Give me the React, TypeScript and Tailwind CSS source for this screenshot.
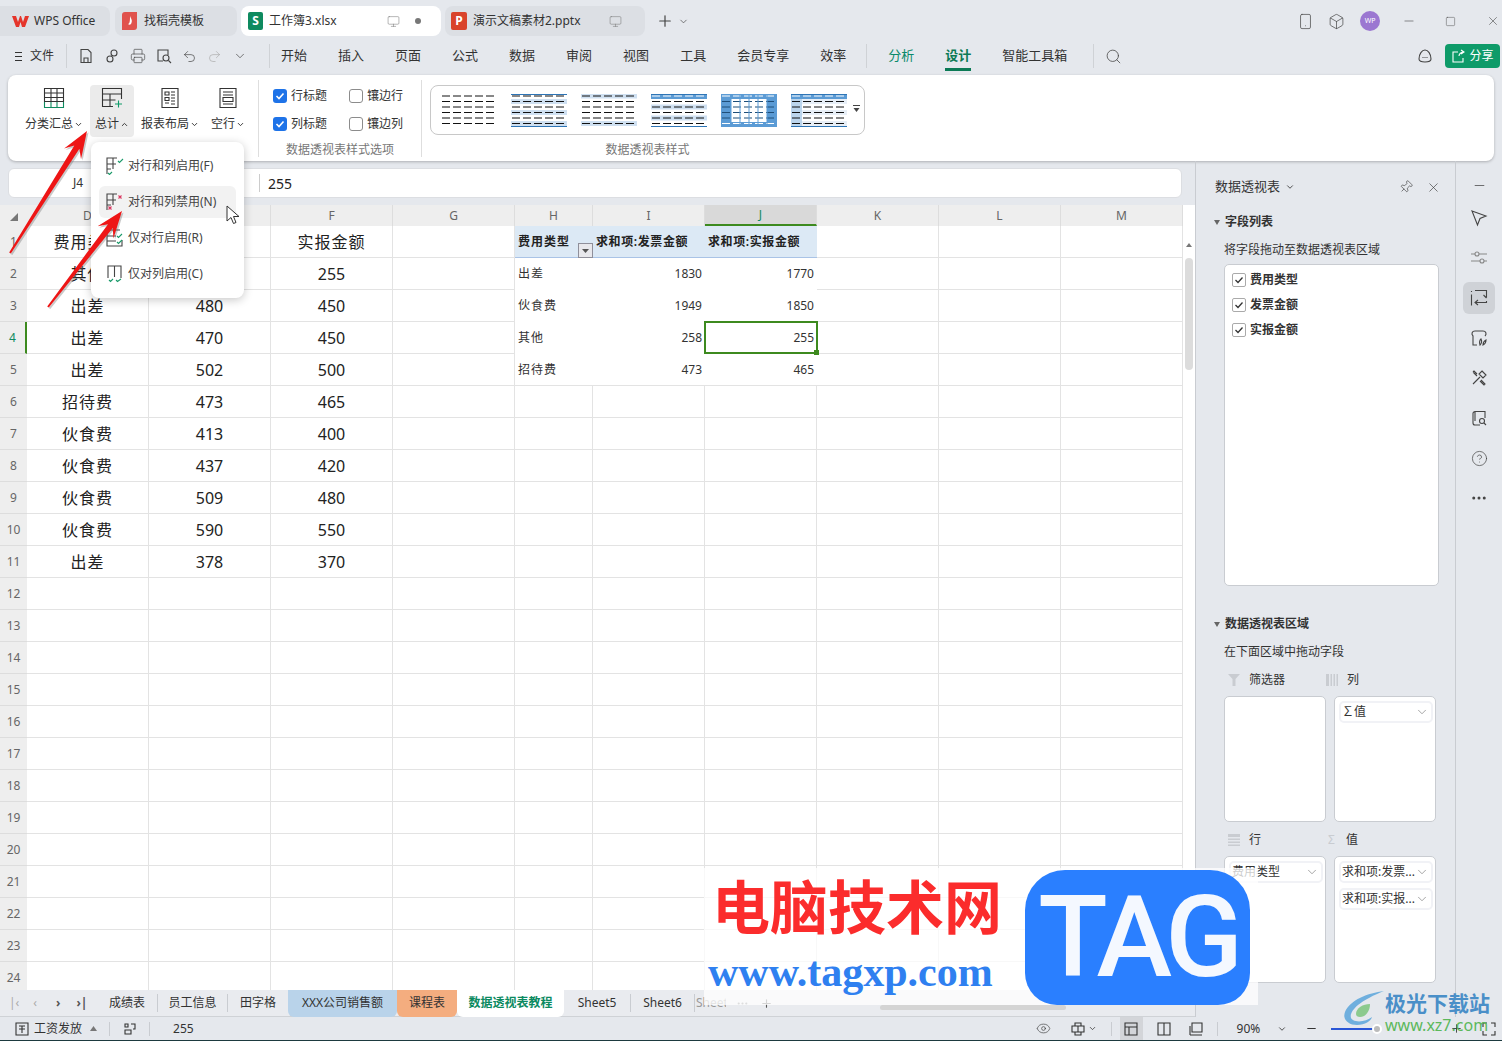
import { ReactNode } from "react";
import {
  Box, ChevronDown, ChevronUp, CircleHelp, Ellipsis, Eye, Minus, Monitor, Pin, Plus, Printer,
  Redo2, Search, Smartphone, Square, Undo2, X,
} from "lucide-react";

const columns = [
  { name: "D", w: "w-[122px]" },
  { name: "E", w: "w-[122px]" },
  { name: "F", w: "w-[122px]" },
  { name: "G", w: "w-[122px]" },
  { name: "H", w: "w-[78px]" },
  { name: "I", w: "w-[112px]" },
  { name: "J", w: "w-[112px]" },
  { name: "K", w: "w-[122px]" },
  { name: "L", w: "w-[122px]" },
  { name: "M", w: "w-[122px]" },
];

const source = [
  ["费用类型", "发票金额", "实报金额"],
  ["其他", "258", "255"],
  ["出差", "480", "450"],
  ["出差", "470", "450"],
  ["出差", "502", "500"],
  ["招待费", "473", "465"],
  ["伙食费", "413", "400"],
  ["伙食费", "437", "420"],
  ["伙食费", "509", "480"],
  ["伙食费", "590", "550"],
  ["出差", "378", "370"],
];

const pivot = [
  ["出差", "1830", "1770"],
  ["伙食费", "1949", "1850"],
  ["其他", "258", "255"],
  ["招待费", "473", "465"],
];

function Ico({ w = 20, h = 20, vb = "0 0 20 20", className = "", children }: { w?: number; h?: number; vb?: string; className?: string; children: ReactNode }) {
  return (
    <svg width={w} height={h} viewBox={vb} fill="none" stroke="currentColor" strokeWidth="1.1" className={className}>
      {children}
    </svg>
  );
}

function RibbonButton({ label, icon, active, up }: { label: string; icon: ReactNode; active?: boolean; up?: boolean }) {
  return (
    <div className={`flex h-[52px] flex-col items-center rounded pt-[2px] ${active ? "w-[44px] bg-[#ebebeb]" : label.length > 2 ? "w-[72px]" : "w-[44px]"}`}>
      <div className="h-[22px] text-[#333]">{icon}</div>
      <div className="mt-[6px] flex h-[18px] items-center text-[12px] whitespace-nowrap text-[#333]">
        {label}
        {up ? <ChevronUp size={9} strokeWidth={2.5} className="ml-px" /> : <ChevronDown size={9} strokeWidth={2.5} className="ml-px" />}
      </div>
    </div>
  );
}

function Check({ label, on }: { label: string; on?: boolean }) {
  return (
    <div className="flex h-[28px] items-center gap-1 text-[12px] text-[#333]">
      {on ? (
        <div className="flex h-[14px] w-[14px] items-center justify-center rounded-[3px] bg-[#1e73e8]">
          <svg width="10" height="10" viewBox="0 0 10 10" fill="none" stroke="#fff" strokeWidth="1.6"><path d="M1.5 5l2.5 2.5 4.5-5" /></svg>
        </div>
      ) : (
        <div className="h-[14px] w-[14px] rounded-[3px] border border-[#8c8c8c] bg-white" />
      )}
      {label}
    </div>
  );
}

function Thumb({ head, foot, band, bandColor, side, sideFill, grid, lines }: { head?: boolean; foot?: boolean; band?: number[]; bandColor?: string; side?: boolean; sideFill?: string; grid?: boolean; lines?: boolean }) {
  const ys = [2, 7.5, 13, 18.5, 24, 29.5];
  return (
    <svg width="56" height="33" viewBox="0 0 56 33" className="shrink-0">
      {(band ?? []).map((i) => (
        <rect key={i} x="0" y={ys[i] - 2.5} width="56" height="5" fill={bandColor ?? "#cfe0f1"} />
      ))}
      {sideFill && <rect x="0" y="0" width="11" height="33" fill={sideFill} />}
      {side && <rect x="0" y="0" width="10" height="33" fill="#5b9bd5" />}
      {side && <rect x="46" y="0" width="10" height="33" fill="#5b9bd5" />}
      {head && <rect x="0" y="0" width="56" height="5" fill="#5b9bd5" />}
      {foot && <rect x="0" y="28" width="56" height="5" fill="#5b9bd5" />}
      {ys.map((y, i) => (
        <line key={y} x1="1" x2="55" y1={y} y2={y} stroke={(head && i === 0) || (foot && i === 5) ? "#fff" : grid ? "#1f4e79" : "#111"} strokeWidth="1" strokeDasharray="8 3" />
      ))}
      {lines && <line x1="0" x2="56" y1="0.5" y2="0.5" stroke="#2e75b6" />}
      {lines && <line x1="0" x2="56" y1="32.5" y2="32.5" stroke="#2e75b6" />}
      {grid && [10, 19, 28, 37, 46].map((x) => <line key={x} x1={x} x2={x} y1="0" y2="33" stroke="#5b9bd5" />)}
    </svg>
  );
}

function Chip({ label, wide }: { label: string; wide?: boolean }) {
  return (
    <div className={`flex h-[22px] items-center justify-between rounded-[5px] border-2 border-[#f1f2f6] bg-white pr-[2px] pl-[1px] text-[12px] whitespace-nowrap text-[#333] ${wide ? "w-[94px]" : "w-[94px]"}`}>
      <span>{label}</span>
      <ChevronDown size={14} strokeWidth={1} className="shrink-0 text-[#666]" />
    </div>
  );
}

function AreaBox({ h, children }: { h: string; children?: ReactNode }) {
  return <div className={`flex w-[102px] flex-col gap-[5px] rounded-[5px] border border-[#c9ccd1] bg-white p-1 ${h}`}>{children}</div>;
}

function arrowPoints(x1: number, y1: number, x2: number, y2: number) {
  const len = Math.hypot(x2 - x1, y2 - y1);
  const dx = (x2 - x1) / len;
  const dy = (y2 - y1) / len;
  const nx = -dy;
  const ny = dx;
  const p = (back: number, off: number) => `${x2 - dx * back + nx * off},${y2 - dy * back + ny * off}`;
  return [`${x1 + nx * 1},${y1 + ny * 1}`, p(19, 3), p(27, 10), `${x2},${y2}`, p(27, -10), p(19, -3), `${x1 - nx * 1},${y1 - ny * 1}`].join(" ");
}

function MenuRow({ label, active, icon }: { label: string; active?: boolean; icon: ReactNode }) {
  return (
    <div className={`flex h-8 items-center gap-[4px] rounded-md pl-[7px] text-[12px] whitespace-nowrap text-[#444] ${active ? "bg-[#f2f2f2]" : ""}`}>
      {icon}
      {label}
    </div>
  );
}

const tick = "#1a9a6a";
const cross = "#d9365f";

export default function App() {
  return (
    <div className="relative flex h-[1041px] w-[1502px] flex-col overflow-hidden bg-[#e5e8ed] [font-family:'Noto_Sans','Noto_Sans_CJK_SC',sans-serif] text-[#333]">
      {/* title bar */}
      <div className="flex h-[40px] items-start pt-[6px] text-[12px]">
        <div className="flex h-[30px] w-[110px] items-center gap-[5px] rounded-r-lg bg-[#dcdfe4] pl-[12px]">
          <svg width="17" height="13" viewBox="0 0 17 13"><path d="M0 1h4l2 6 2-6h1l2 6 2-6h4l-4 11h-3L8.500 7 7 12H4z" fill="#e5352b" /></svg>
          WPS Office
        </div>
        <div className="ml-[5px] flex h-[30px] w-[122px] items-center gap-[7px] rounded-lg bg-[#dcdfe4] pl-[7px]">
          <svg width="15" height="18" viewBox="0 0 15 18"><path d="M3 0h12v15a3 3 0 0 1-3 3H0V3a3 3 0 0 1 3-3z" fill="#e0524d" /><path d="M8 4c1 3 3 4 1 8-1 1-2 1-3 0 2 0 2-4 2-8z" fill="#fff" /></svg>
          找稻壳模板
        </div>
        <div className="ml-[4px] flex h-[30px] w-[200px] items-center rounded-lg bg-white pl-[7px]">
          <div className="flex h-[18px] w-[15px] items-center justify-center rounded-[2px] bg-[#0e8a5f] text-[12px] font-bold text-white">S</div>
          <span className="ml-[6px] w-[118px]">工作簿3.xlsx</span>
          <Monitor size={13} strokeWidth={1} className="text-[#777]" />
          <div className="ml-[15px] h-[6px] w-[6px] rounded-full bg-[#777]" />
        </div>
        <div className="ml-[4px] flex h-[30px] w-[200px] items-center rounded-lg bg-[#dcdfe4] pl-[6px]">
          <div className="flex h-[18px] w-[16px] items-center justify-center rounded-[2px] bg-[#d9432b] text-[12px] font-bold text-white">P</div>
          <span className="ml-[6px] w-[136px] whitespace-nowrap">演示文稿素材2.pptx</span>
          <Monitor size={13} strokeWidth={1} className="text-[#777]" />
        </div>
        <div className="ml-[11px] flex h-[30px] items-center text-[#444]">
          <Plus size={18} strokeWidth={1.6} />
          <ChevronDown size={11} strokeWidth={1.5} className="ml-[4px]" />
        </div>
        <div className="ml-auto flex h-[30px] items-center text-[#444]">
          <Smartphone size={17} strokeWidth={1} />
          <Box size={17} strokeWidth={1} className="ml-[14px]" />
          <div className="ml-[15px] flex h-[20px] w-[20px] items-center justify-center rounded-full bg-[#9b77d1] text-[7px] text-white">WP</div>
          <Minus size={14} strokeWidth={1} className="ml-[22px]" />
          <Square size={11} strokeWidth={1} className="ml-[29px]" />
          <X size={14} strokeWidth={1} className="mr-[2px] ml-[30px]" />
        </div>
      </div>

      {/* menu bar */}
      <div className="flex h-[32px] items-center text-[13px] text-[#333]">
        <div className="ml-[15px] flex w-[7px] flex-col gap-[3px]">
          <div className="h-px bg-[#333]" /><div className="h-px bg-[#333]" /><div className="h-px bg-[#333]" />
        </div>
        <span className="ml-[8px] text-[12px]">文件</span>
        <div className="ml-[12px] h-[24px] w-px bg-[#cfd2d6]" />
        <div className="ml-[11px] flex items-center gap-[10px] text-[#444]">
          <Ico w={16} h={16} vb="0 0 16 16"><path d="M3 1.500h7l3 3V14.500H3zM6 14.500V10h4v4.500" /></Ico>
          <Ico w={16} h={16} vb="0 0 16 16"><circle cx="10" cy="5" r="3" /><circle cx="6" cy="11" r="3" /></Ico>
          <Printer size={16} strokeWidth={1} />
          <Ico w={16} h={16} vb="0 0 16 16"><path d="M7 13H2V2h10v5" /><circle cx="10" cy="10" r="3" /><path d="M12.500 12.500L15 15" /></Ico>
          <Undo2 size={15} strokeWidth={1.1} />
          <Redo2 size={15} strokeWidth={1.1} className="text-[#aaa]" />
          <ChevronDown size={14} strokeWidth={1.2} className="ml-[1px]" />
        </div>
        <div className="ml-[22px] h-[24px] w-px bg-[#cfd2d6]" />
        <div className="ml-[11px] flex items-center gap-[31px]">
          {["开始", "插入", "页面", "公式", "数据", "审阅", "视图", "工具", "会员专享", "效率"].map((m) => <span key={m}>{m}</span>)}
        </div>
        <div className="ml-[20px] h-[24px] w-px bg-[#cfd2d6]" />
        <span className="ml-[21px] text-[#0b8a6a]">分析</span>
        <div className="relative ml-[31px] font-semibold text-[#0b7a55]">
          设计
          <div className="absolute top-[22px] left-0 h-[3px] w-full bg-[#0b7a55]" />
        </div>
        <span className="ml-[31px]">智能工具箱</span>
        <div className="ml-[26px] h-[24px] w-px bg-[#cfd2d6]" />
        <Search size={17} strokeWidth={1.1} className="ml-[11px] text-[#444]" />
        <Ico w={18} h={18} vb="0 0 18 18" className="ml-auto text-[#444]"><path d="M3 12c0-5 3-9 6-9s6 4 6 9c0 2-2 3-6 3s-6-1-6-3z" /><path d="M6.500 10.500h1M8.500 10.500h1M10.500 10.500h1" /></Ico>
        <div className="mr-[2px] ml-[11px] flex h-[24px] w-[55px] items-center justify-center gap-[3px] rounded bg-[#0e9b69] text-[12px] text-white">
          <Ico w={15} h={15} vb="0 0 15 15"><path d="M7 3H2v10h10V9M8 7c0-2 2-4 5-4M10 1l3 2-3 2" /></Ico>
          分享
        </div>
      </div>

      {/* ribbon */}
      <div className="mx-2 mt-[3px] flex h-[86px] rounded-lg bg-white shadow-[0_1px_3px_rgba(0,0,0,0.25)]">
        <div className="mt-[10px] ml-[10px] flex w-[232px] items-start">
          <RibbonButton
            label="分类汇总"
            icon={
              <Ico w={22} h={22} vb="0 0 22 22">
                <path d="M1.500 1.500h19v13h-19zM1.500 6h19M1.500 10.500h19M8 1.500v13M14 1.500v13" />
                <path d="M1.500 15v5.500h19V15M8 15v5.500M14 15v5.500" stroke="#0e8a5f" />
              </Ico>
            }
          />
          <RibbonButton
            label="总计"
            active
            up
            icon={
              <Ico w={22} h={22} vb="0 0 22 22">
                <path d="M12 19.500H1.500v-18h19V12M1.500 7h19M1.500 13h13M9 7v12.500" />
                <path d="M14 17h7M17.500 13.500v7" stroke="#0e9b69" />
              </Ico>
            }
          />
          <RibbonButton
            label="报表布局"
            icon={
              <Ico w={22} h={22} vb="0 0 22 22">
                <path d="M3 1.500h16v19H3zM6 5h4v3H6zM6 10.500h4v3H6zM6 16h4M12 5h4M12 8h4M12 11h4M12 14h4M12 17h4" />
              </Ico>
            }
          />
          <RibbonButton
            label="空行"
            icon={
              <Ico w={22} h={22} vb="0 0 22 22">
                <path d="M3 1.500h16v19H3zM6 5h10M6 8h10M6 10.500h10v4H6zM6 17h10" />
              </Ico>
            }
          />
        </div>
        <div className="mt-[5px] ml-[8px] h-[77px] w-px bg-[#dedede]" />
        <div className="flex w-[162px] flex-col pt-[7px]">
          <div className="ml-[14px] grid h-[56px] grid-cols-[76px_60px]">
            <Check label="行标题" on />
            <Check label="镶边行" />
            <Check label="列标题" on />
            <Check label="镶边列" />
          </div>
          <div className="mt-[3px] h-[18px] text-center text-[12px] leading-[18px] whitespace-nowrap text-[#777]">数据透视表样式选项</div>
        </div>
        <div className="mt-[5px] h-[77px] w-px bg-[#dedede]" />
        <div className="ml-[8px] flex flex-col pt-[10px]">
          <div className="flex h-[50px] w-[435px] items-center gap-[14px] rounded-lg border border-[#c8c8c8] pl-[10px]">
            <Thumb />
            <Thumb lines band={[1, 3, 5]} />
            <Thumb band={[0, 5]} lines={false} />
            <Thumb head band={[2, 4]} lines />
            <Thumb side head foot grid />
            <Thumb head sideFill="#bcd5ec" lines band={[1, 3, 5]} bandColor="#e8eff7" />
            <svg width="8" height="10" viewBox="0 0 8 10" className="-ml-[8px]" fill="#444"><rect x="0" y="0" width="7" height="1" /><path d="M0.500 3h6l-3 4z" /></svg>
          </div>
          <div className="mt-[6px] h-[18px] text-center text-[12px] leading-[18px] text-[#777]">数据透视表样式</div>
        </div>
      </div>

      {/* workspace */}
      <div className="flex h-[856px]">
        <div className="flex w-[1195px] flex-col">
          <div className="mt-[7px] ml-[8px] flex h-[30px] w-[1174px] items-center rounded-md border border-[#dcdee2] bg-white">
            <span className="ml-[64px] w-[186px] text-[12px]">J4</span>
            <div className="h-[18px] w-px bg-[#ccc]" />
            <span className="ml-[8px] text-[14px] text-[#222]">255</span>
          </div>

          <div className="mt-[7px] flex h-[21px] bg-[#eeeeee] text-[12px] text-[#666]">
            <div className="flex w-[27px] items-end justify-center pb-[5px]">
              <svg width="8" height="8" viewBox="0 0 8 8"><path d="M8 0v8H0z" fill="#777" /></svg>
            </div>
            {columns.map((c) => (
              <div key={c.name} className={`flex items-center justify-center border-r border-[#dddddd] ${c.w} ${c.name === "J" ? "border-b-2 border-b-[#3d8a1f] bg-[#d9d9d9] text-[#0e8a5f]" : ""}`}>
                {c.name}
              </div>
            ))}
            <div className="flex-1 bg-white" />
          </div>

          <div className="flex h-[764px] overflow-hidden bg-white">
            <div className="w-[1183px] shrink-0">
              {Array.from({ length: 24 }, (_, r) => {
                const src = source[r];
                const pv = r >= 1 && r <= 4 ? pivot[r - 1] : null;
                return (
                  <div key={r} className="flex h-8">
                    <div className={`flex w-[27px] items-center justify-center border-b border-[#dddddd] bg-[#eeeeee] text-[12px] ${r === 3 ? "border-r-2 border-r-[#3d8a1f] bg-[#d9d9d9] text-[#0e8a5f]" : "text-[#666]"}`}>
                      {r + 1}
                    </div>
                    {[0, 1, 2].map((c) => (
                      <div key={c} className={`flex w-[122px] items-center justify-center border-r border-b border-[#e3e3e3] text-[#222] ${c === 0 ? "" : ""} text-[16px] ${r === 0 || c === 0 ? "tracking-[1px]" : ""}`}>
                        {src?.[c]}
                      </div>
                    ))}
                    <div className="w-[122px] border-r border-b border-[#e3e3e3]" />
                    {r === 0 ? (
                      <>
                        <div className="relative flex w-[78px] items-center border-b border-[#a9c3e6] bg-[#dce9f5] pl-[3px] text-[12px] font-semibold tracking-[1px] whitespace-nowrap text-[#222]">
                          费用类型
                          <div className="absolute top-[17px] right-0 flex h-[15px] w-[15px] items-center justify-center border border-[#8f8f9a] bg-[#e8e8ec]">
                            <svg width="7" height="4" viewBox="0 0 7 4"><path d="M0 0h7L3.500 4z" fill="#555" /></svg>
                          </div>
                        </div>
                        <div className="flex w-[112px] items-center border-b border-[#a9c3e6] bg-[#dce9f5] pl-[3px] text-[12px] font-semibold tracking-[0.6px] whitespace-nowrap text-[#222]">求和项:发票金额</div>
                        <div className="flex w-[112px] items-center border-b border-[#a9c3e6] bg-[#dce9f5] pl-[3px] text-[12px] font-semibold tracking-[0.6px] whitespace-nowrap text-[#222]">求和项:实报金额</div>
                      </>
                    ) : pv ? (
                      <>
                        <div className={`flex w-[78px] items-center pl-[3px] text-[12px] tracking-[1px] text-[#333] ${r === 4 ? "border-b border-[#e3e3e3]" : ""}`}>{pv[0]}</div>
                        <div className={`flex w-[112px] items-center justify-end pr-[3px] text-[12px] text-[#333] ${r === 4 ? "border-b border-[#e3e3e3]" : ""}`}>{pv[1]}</div>
                        {r === 3 ? (
                          <div className="relative z-10 -mt-px flex h-[33px] w-[114px] -ml-px -mr-px items-center justify-end border-2 border-[#3d8a1f] pr-[2px] text-[12px] text-[#333]">
                            {pv[2]}
                            <div className="absolute -right-[3px] -bottom-[3px] h-[5px] w-[5px] bg-[#3d8a1f]" />
                          </div>
                        ) : (
                          <div className={`flex w-[112px] items-center justify-end pr-[3px] text-[12px] text-[#333] ${r === 4 ? "border-b border-[#e3e3e3]" : ""}`}>{pv[2]}</div>
                        )}
                      </>
                    ) : (
                      <>
                        <div className="w-[78px] border-r border-b border-[#e3e3e3]" />
                        <div className="w-[112px] border-r border-b border-[#e3e3e3]" />
                        <div className="w-[112px] border-r border-b border-[#e3e3e3]" />
                      </>
                    )}
                    <div className="w-[122px] border-r border-b border-[#e3e3e3]" />
                    <div className="w-[122px] border-r border-b border-[#e3e3e3]" />
                    <div className="w-[122px] border-r border-b border-[#e3e3e3]" />
                  </div>
                );
              })}
            </div>
            <div className="flex w-[12px] flex-col items-center pt-[17px]">
              <svg width="6" height="4" viewBox="0 0 6 4"><path d="M3 0l3 4H0z" fill="#777" /></svg>
              <div className="mt-[11px] h-[112px] w-[8px] rounded bg-[#dcdcdc]" />
            </div>
          </div>

          {/* sheet tabs */}
          <div className="flex h-[27px] items-center border-b border-[#cfd2d6] bg-[#e9ebef] text-[12px] whitespace-nowrap text-[#333]">
            <div className="flex w-[97px] items-center gap-[7px] pl-[9px] text-[#555]">
              <span className="text-[#aaa]">|‹</span>
              <span className="ml-[7px] text-[#aaa]">‹</span>
              <span className="ml-[12px] font-bold">›</span>
              <span className="ml-[9px] font-bold">›|</span>
            </div>
            <div className="flex h-[27px] w-[60px] items-center justify-center">成绩表</div>
            <div className="h-[18px] w-px bg-[#c9ccd1]" />
            <div className="flex h-[27px] w-[69px] items-center justify-center">员工信息</div>
            <div className="h-[18px] w-px bg-[#c9ccd1]" />
            <div className="flex h-[27px] w-[60px] items-center justify-center">田字格</div>
            <div className="flex h-[27px] w-[109px] items-center justify-center rounded-b-md bg-[#b9d3ea]">XXX公司销售额</div>
            <div className="flex h-[27px] w-[60px] items-center justify-center rounded-b-md bg-[#f4ad7f]">课程表</div>
            <div className="flex h-[27px] w-[107px] items-center justify-center rounded-b-md bg-white font-semibold text-[#0b8a5f]">数据透视表教程</div>
            <div className="flex h-[27px] w-[66px] items-center justify-center">Sheet5</div>
            <div className="h-[18px] w-px bg-[#c9ccd1]" />
            <div className="flex h-[27px] w-[63px] items-center justify-center">Sheet6</div>
            <div className="h-[18px] w-px bg-[#c9ccd1]" />
            <div className="w-[31px] overflow-hidden pl-[1px] text-[#999]">Sheet7</div>
            <Ellipsis size={13} className="ml-[10px] text-[#777]" />
            <Plus size={13} strokeWidth={2} className="ml-[11px] text-[#555]" />
            <div className="mt-[8px] ml-[107px] h-[5px] w-[186px] rounded bg-[#d4d4d4]" />
          </div>
        </div>

        {/* pivot panel */}
        <div className="w-[261px] border-x border-[#c9ccd1] pl-[28px]">
          <div className="mt-[8px] -ml-[9px] flex h-[36px] w-[226px] items-center text-[13px]">
            数据透视表
            <ChevronDown size={10} strokeWidth={2} className="ml-[5px]" />
            <Pin size={14} strokeWidth={1} className="ml-auto rotate-45" />
            <X size={15} strokeWidth={1} className="ml-[13px]" />
          </div>
          <div className="mt-[7px] flex h-[20px] items-center text-[12px] font-semibold">
            <svg width="6" height="5" viewBox="0 0 6 5" className="-ml-[10px] mr-[5px]"><path d="M0 0h6L3 5z" fill="#666" /></svg>
            字段列表
          </div>
          <div className="mt-[8px] h-[20px] text-[12px] leading-[20px]">将字段拖动至数据透视表区域</div>
          <div className="mt-[4px] h-[322px] w-[215px] rounded-[5px] border border-[#c9ccd1] bg-white pt-[2px] pl-[7px]">
            {["费用类型", "发票金额", "实报金额"].map((f) => (
              <div key={f} className="flex h-[25px] items-center gap-[4px] text-[12px] font-semibold">
                <div className="flex h-[14px] w-[14px] items-center justify-center rounded-[2px] border border-[#aaa] bg-white">
                  <svg width="10" height="10" viewBox="0 0 10 10" fill="none" stroke="#333" strokeWidth="1.3"><path d="M1.500 5l2.500 2.500 4.500-5" /></svg>
                </div>
                {f}
              </div>
            ))}
          </div>
          <div className="mt-[28px] flex h-[20px] items-center text-[12px] font-semibold">
            <svg width="6" height="5" viewBox="0 0 6 5" className="-ml-[10px] mr-[5px]"><path d="M0 0h6L3 5z" fill="#666" /></svg>
            数据透视表区域
          </div>
          <div className="mt-[8px] h-[20px] text-[12px] leading-[20px]">在下面区域中拖动字段</div>
          <div className="mt-[8px] flex h-[20px] items-center text-[12px]">
            <svg width="14" height="14" viewBox="0 0 14 14" className="ml-[3px]"><path d="M1 1h12L8.500 6v7h-3V6z" fill="#c9ccd1" /></svg>
            <span className="ml-[8px] w-[77px]">筛选器</span>
            <svg width="12" height="12" viewBox="0 0 12 12" className="mr-[9px]" fill="#c9ccd1"><rect width="3" height="12" /><rect x="4.500" width="1.500" height="12" /><rect x="7.500" width="1.500" height="12" /><rect x="10.500" width="1.500" height="12" /></svg>
            列
          </div>
          <div className="mt-[6px] flex gap-[8px]">
            <AreaBox h="h-[126px]" />
            <AreaBox h="h-[126px]"><Chip label="∑值" /></AreaBox>
          </div>
          <div className="mt-[8px] flex h-[20px] items-center text-[12px]">
            <svg width="12" height="12" viewBox="0 0 12 12" className="ml-[4px]" fill="#c9ccd1"><rect width="12" height="3" /><rect y="4.500" width="12" height="1.500" /><rect y="7.500" width="12" height="1.500" /><rect y="10.500" width="12" height="1.500" /></svg>
            <span className="ml-[9px] w-[79px]">行</span>
            <span className="mr-[11px] text-[#c9ccd1]">Σ</span>
            值
          </div>
          <div className="mt-[6px] flex gap-[8px]">
            <AreaBox h="h-[127px]"><Chip label="费用类型" /></AreaBox>
            <AreaBox h="h-[127px]">
              <Chip label="求和项:发票..." />
              <Chip label="求和项:实报..." />
            </AreaBox>
          </div>
        </div>

        {/* right rail */}
        <div className="flex w-[46px] flex-col items-center text-[#444]">
          <Minus size={15} strokeWidth={1.2} className="mt-[17px]" />
          <div className="mt-[9px] flex h-[32px] w-[32px] items-center justify-center">
            <Ico w={18} h={18} vb="0 0 18 18"><path d="M2 2l14 5-6 2.500L7.500 16z" /></Ico>
          </div>
          <div className="mt-[8px] flex flex-col gap-[8px]">
            <div className="flex h-[32px] w-[32px] items-center justify-center text-[#888]">
              <Ico w={18} h={18} vb="0 0 18 18"><path d="M1 5h4M9 5h8M1 12h9M14 12h3" /><circle cx="7" cy="5" r="2" /><circle cx="12" cy="12" r="2" /></Ico>
            </div>
            <div className="flex h-[32px] w-[32px] items-center justify-center rounded-md bg-[#cfd2d7]">
              <Ico w={18} h={18} vb="0 0 18 18"><path d="M1.500 2v1M1.500 5.500v11M5 1.500h11.500v7M13.500 6l3 3M16.500 12v1.500H5M8 11l-3 2.500 3 2.500" /></Ico>
            </div>
            <div className="flex h-[32px] w-[32px] items-center justify-center">
              <Ico w={18} h={18} vb="0 0 18 18"><path d="M7 16H3V7C1 5 2 2 5 2h8c3 0 4 3 2 5" /><path d="M10 16c-1-3 0-5 1-6 1 2 1 4-1 6zM13 16c0-3 1-4 3-5 0 2-1 4-3 5z" /></Ico>
            </div>
            <div className="flex h-[32px] w-[32px] items-center justify-center">
              <Ico w={18} h={18} vb="0 0 18 18"><path d="M3 15l7-7M12 2l4 4-3 3-4-4zM3 3l4 4M3 3l1-1 3 3M11 11l4 4-1 1-4-4" /></Ico>
            </div>
            <div className="flex h-[32px] w-[32px] items-center justify-center">
              <Ico w={18} h={18} vb="0 0 18 18"><path d="M15 9V2.500H5a2 2 0 0 0-2 2V14a2 2 0 0 0 2 2h5M5 2.500V12" /><circle cx="12" cy="12" r="2.500" /><path d="M14 14l2 2" /></Ico>
            </div>
            <div className="flex h-[32px] w-[32px] items-center justify-center">
              <CircleHelp size={17} strokeWidth={1} />
            </div>
            <div className="flex h-[32px] w-[32px] items-center justify-center">
              <Ellipsis size={18} strokeWidth={2} />
            </div>
          </div>
        </div>
      </div>

      {/* status bar */}
      <div className="flex h-[24px] items-center border-b border-[#1d3a3f] bg-[#e5e8ed] text-[12px] text-[#333]">
        <Ico w={16} h={16} vb="0 0 16 16" className="ml-[14px]"><path d="M2 2h12v12H2zM5 5h6M5 8h6M8 5v7" /></Ico>
        <span className="ml-[4px]">工资发放</span>
        <svg width="7" height="5" viewBox="0 0 7 5" className="ml-[8px]"><path d="M3.500 0L7 5H0z" fill="#777" /></svg>
        <div className="ml-[12px] h-[14px] w-px bg-[#c9ccd1]" />
        <Ico w={14} h={14} vb="0 0 14 14" className="ml-[13px]"><path d="M2 2h3v3H2zM8 2h4v5h-2M2 8h6v4H2z" /></Ico>
        <div className="ml-[12px] h-[14px] w-px bg-[#c9ccd1]" />
        <span className="ml-[23px]">255</span>
        <Eye size={15} strokeWidth={1} className="ml-[842px]" />
        <Ico w={16} h={16} vb="0 0 16 16" className="ml-[19px]"><path d="M5 5V2h6v3M5 11v3h6v-3M2 5h12v6H2zM8 5v6" /></Ico>
        <ChevronDown size={9} strokeWidth={2} className="ml-[2px]" />
        <div className="ml-[14px] h-[14px] w-px bg-[#c9ccd1]" />
        <div className="ml-[8px] flex h-[23px] w-[23px] items-center justify-center bg-[#d3d5d9]">
          <Ico w={14} h={14} vb="0 0 14 14"><path d="M1 1h12v12H1zM1 5h12M5 5v8" /></Ico>
        </div>
        <Ico w={14} h={14} vb="0 0 14 14" className="ml-[14px]"><path d="M1 1h12v12H1zM7 1v12" /></Ico>
        <Ico w={14} h={14} vb="0 0 14 14" className="ml-[18px]"><path d="M3 1h10v9H3zM1 13h12M1 4v9" /></Ico>
        <div className="ml-[14px] h-[14px] w-px bg-[#c9ccd1]" />
        <span className="ml-[19px]">90%</span>
        <ChevronDown size={10} strokeWidth={2} className="ml-[17px]" />
        <Minus size={13} strokeWidth={2} className="ml-[18px]" />
        <div className="relative ml-[13px] h-[2px] w-[46px] bg-[#2a56d6]">
          <div className="absolute -top-[4px] -right-[5px] h-[10px] w-[10px] rounded-full border-2 border-white bg-[#bbb]" />
        </div>
        <Plus size={13} strokeWidth={1.6} className="ml-[73px]" />
        <Ico w={14} h={14} vb="0 0 14 14" className="ml-[19px]"><path d="M1 5V1h4M9 1h4v4M13 9v4H9M5 13H1V9" /></Ico>
      </div>

      {/* total dropdown */}
      <div className="absolute top-[142px] left-[91px] flex h-[156px] w-[153px] flex-col gap-[4px] rounded-lg bg-white px-[8px] pt-[8px] shadow-[0_2px_10px_rgba(0,0,0,0.22)]">
        <MenuRow
          label="对行和列启用(F)"
          icon={<Ico w={18} h={18} vb="0 0 18 18"><path d="M1 17V1h10M1 7h9M7 1v11M1 12h4" /><path d="M2 16l1.500 1.500L6 15M12 4l1.500 1.500L17 2" stroke={tick} /></Ico>}
        />
        <MenuRow
          label="对行和列禁用(N)"
          active
          icon={<Ico w={18} h={18} vb="0 0 18 18"><path d="M1 17V1h10M1 7h9M7 1v11M1 12h4" /><path d="M2.500 13.500l3 3M5.500 13.500l-3 3M12.500 2.500l3 3M15.500 2.500l-3 3" stroke={cross} /></Ico>}
        />
        <MenuRow
          label="仅对行启用(R)"
          icon={<Ico w={18} h={18} vb="0 0 18 18"><path d="M1 1h13M1 7h9M1 1v16h15v-6M1 12h9" /><path d="M11 7l1.500 1.500L16 5M11 13l1.500 1.500L16 11" stroke={tick} /></Ico>}
        />
        <MenuRow
          label="仅对列启用(C)"
          icon={<Ico w={18} h={18} vb="0 0 18 18"><path d="M2 13V1h13v12M8.500 1v11" /><path d="M3 15l1.500 1.500L7 14M10 15l1.500 1.500L15 14" stroke={tick} /></Ico>}
        />
      </div>

      {/* mouse cursor */}
      <svg width="14" height="20" viewBox="0 0 14 20" className="absolute top-[205px] left-[226px]">
        <path d="M1 1v15l4-3.500 2.500 6 2.500-1-2.500-6H13z" fill="#fff" stroke="#333" strokeWidth="1" />
      </svg>

      {/* annotation arrows */}
      <svg width="1502" height="1041" viewBox="0 0 1502 1041" className="pointer-events-none absolute top-0 left-0">
        <polygon points={arrowPoints(10, 253, 87, 131)} fill="#666" opacity="0.35" transform="translate(1.500 1.500)" />
        <polygon points={arrowPoints(48, 307, 122, 211)} fill="#666" opacity="0.35" transform="translate(1.500 1.500)" />
        <polygon points={arrowPoints(10, 253, 87, 131)} fill="#ee1515" />
        <polygon points={arrowPoints(48, 307, 122, 211)} fill="#ee1515" />
      </svg>

      {/* watermark */}
      <div className="absolute top-[868px] left-[704px] flex h-[137px] w-[554px] bg-white/75">
        <div className="flex w-[321px] flex-col pl-[8px]">
          <div className="mt-[5px] text-[58px] leading-[68px] font-bold whitespace-nowrap text-[#fb2c2c]">电脑技术网</div>
          <div className="mt-[7px] -ml-[4px] [font-family:'Liberation_Serif',serif] text-[42px] leading-[48px] font-semibold whitespace-nowrap text-[#2f80f0]">www.tagxp.com</div>
        </div>
        <div className="mt-[2px] flex h-[135px] w-[225px] items-start justify-center rounded-t-[40px] rounded-b-[32px] bg-[#2a7fff] pt-[2px] [font-family:Roboto,sans-serif] text-[114px] leading-[130px] font-medium tracking-[-6px] text-white/95">
          TAG
        </div>
      </div>
      <div className="absolute top-[990px] left-[1342px] flex items-start">
        <svg width="44" height="38" viewBox="0 0 44 38" fill="none">
          <path d="M42 1C26 3 8 10 3 22c-3 8 4 13 12 13 8 0 14-4 15-8-5 4-14 6-19 3-5-3-1-10 5-15C22 10 32 5 42 1z" fill="#5aa5da" opacity="0.85" />
          <path d="M28 14c-7 0-14 4-14 10 0 3 4 4 8 2 3-2 6-6 6-12z" fill="#7cc47c" opacity="0.85" />
        </svg>
        <div className="-ml-px">
          <div className="text-[21px] leading-[26px] font-bold whitespace-nowrap text-[#4a8fc8]">极光下载站</div>
          <div className="text-[16px] leading-[18px] whitespace-nowrap text-[#5cb85c]">www.xz7.com</div>
        </div>
      </div>
    </div>
  );
}
